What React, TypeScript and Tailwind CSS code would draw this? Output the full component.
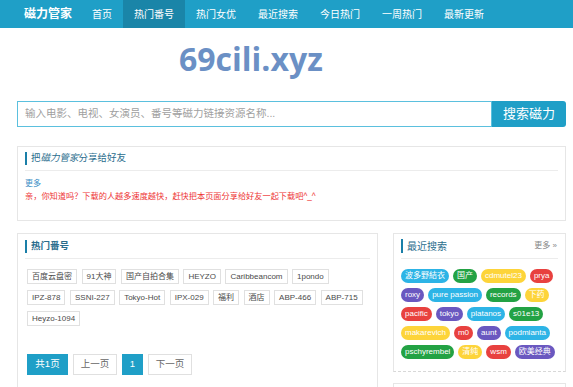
import React from "react";

const nav = ["首页", "热门番号", "热门女优", "最近搜索", "今日热门", "一周热门", "最新更新"];

const tags = [
  "百度云盘密", "91大神", "国产自拍合集", "HEYZO", "Caribbeancom", "1pondo",
  "IPZ-878", "SSNI-227", "Tokyo-Hot", "IPX-029", "福利", "酒店", "ABP-466", "ABP-715",
  "Heyzo-1094",
];

const B = "bg-[#2db4e6]";
const G = "bg-[#23a244]";
const Y = "bg-[#fdd43a]";
const R = "bg-[#e8413f]";
const P = "bg-[#6a58c0]";

const badges: [string, string][] = [
  ["波多野結衣", B], ["国产", G], ["cdmutel23", Y], ["prya", R],
  ["roxy", P], ["pure passion", B], ["records", G], ["下药", Y],
  ["pacific", R], ["tokyo", P], ["platanos", B], ["s01e13", G],
  ["makarevich", Y], ["m0", R], ["aunt", P], ["podmianta", B],
  ["pschyrembel", G], ["清纯", Y], ["wsm", R], ["欧美经典", P],
];

export default function App() {
  return (
    <div
      className="w-[573px] h-[387px] overflow-hidden bg-white"
      style={{ fontFamily: '"Liberation Sans", "Noto Sans CJK SC", sans-serif' }}
    >
      <header className="h-[28px] bg-[#1f9fc7] flex items-stretch pl-[24px] text-white">
        <div className="flex items-center text-[12px] font-bold mr-[9px]">磁力管家</div>
        {nav.map((n, i) => (
          <div
            key={n}
            className={`flex items-center px-[11px] text-[10px] ${i === 1 ? "bg-[#1a85a8]" : ""}`}
          >
            {n}
          </div>
        ))}
      </header>

      <div className="pt-[11px] pl-[179px]">
        <div
          className="text-[32px] leading-[40px] font-bold text-[#6b90c5]"
          style={{ fontFamily: '"Open Sans", sans-serif' }}
        >
          69cili.xyz
        </div>
      </div>

      <div className="ml-[17px] w-[549px] mt-[22px] flex h-[26px]">
        <div className="flex-1 border border-[#5bc0de] flex items-center px-[7px] text-[10.5px] text-[#a0a0a0]">
          输入电影、电视、女演员、番号等磁力链接资源名称...
        </div>
        <div className="w-[74px] bg-[#1f9fc7] text-white text-[13px] flex items-center justify-center rounded-r-[3px]">
          搜索磁力
        </div>
      </div>

      <div className="ml-[17px] w-[549px] mt-[19px] border border-[#e6e6e6] px-[7px] pt-[5px] pb-[18px]">
        <div className="flex items-center h-[13px]">
          <div className="w-[2px] h-[13px] bg-[#1a7fa8] mr-[4px]" />
          <div className="text-[9.5px] text-[#2a6d8d]">
            把<em>磁力管家</em>分享给好友
          </div>
        </div>
        <div className="mt-[5px] border-b border-[#ececec]" />
        <div className="mt-[8px] text-[8px] leading-[10px] text-[#3c8fc6]">更多</div>
        <div className="mt-[3px] text-[8.2px] leading-[10px] text-[#ee3535]">
          亲，你知道吗？下载的人越多速度越快，赶快把本页面分享给好友一起下载吧^_^
        </div>
      </div>

      <div className="ml-[17px] w-[549px] mt-[12px] flex gap-[15px] items-start">
        <div className="w-[361px] border border-[#e6e6e6] px-[7px] pt-[6px] pb-[40px]">
          <div className="flex items-center h-[13px]">
            <div className="w-[2px] h-[13px] bg-[#1a7fa8] mr-[4px]" />
            <div className="text-[9.5px] font-semibold text-[#2a6d8d]">热门番号</div>
          </div>
          <div className="mt-[5px] border-b border-[#ececec]" />
          <div className="mt-[10px] pl-[2px] flex flex-wrap gap-x-[4.5px] gap-y-[6px]">
            {tags.map((t) => (
              <div
                key={t}
                className="h-[15px] px-[4px] border border-[#e0e0e0] text-[8px] text-[#4a4a4a] flex items-center"
              >
                {t}
              </div>
            ))}
          </div>
          <div className="mt-[28px] pl-[2px] flex gap-[5px] text-[9.5px]">
            <div className="h-[21px] w-[41px] bg-[#1f9fc7] text-white flex items-center justify-center">共1页</div>
            <div className="h-[21px] w-[44px] border border-[#e0e0e0] text-[#666] flex items-center justify-center">上一页</div>
            <div className="h-[21px] w-[21px] bg-[#1f9fc7] text-white flex items-center justify-center">1</div>
            <div className="h-[21px] w-[44px] border border-[#e0e0e0] text-[#666] flex items-center justify-center">下一页</div>
          </div>
        </div>

        <div className="w-[173px]">
          <div className="border border-[#e6e6e6] border-b-[#d8d8d8] [border-bottom-style:dashed] px-[7px] pt-[5px] pb-[12px]">
            <div className="flex items-center h-[14px]">
              <div className="w-[2px] h-[14px] bg-[#1a7fa8] mr-[4px]" />
              <div className="text-[10px] text-[#2a6d8d] flex-1">最近搜索</div>
              <div className="text-[8px] text-[#888] pr-[1px]">更多 »</div>
            </div>
            <div className="mt-[5px] border-b border-[#ececec]" />
            <div className="mt-[10px] flex flex-wrap gap-x-[4px] gap-y-[5px]">
              {badges.map(([t, c]) => (
                <div
                  key={t}
                  className={`h-[14px] px-[4px] rounded-full text-white text-[8px] flex items-center ${c}`}
                >
                  {t}
                </div>
              ))}
            </div>
          </div>
          <div className="mt-[11px] border border-[#e6e6e6] h-[40px]" />
        </div>
      </div>
    </div>
  );
}
